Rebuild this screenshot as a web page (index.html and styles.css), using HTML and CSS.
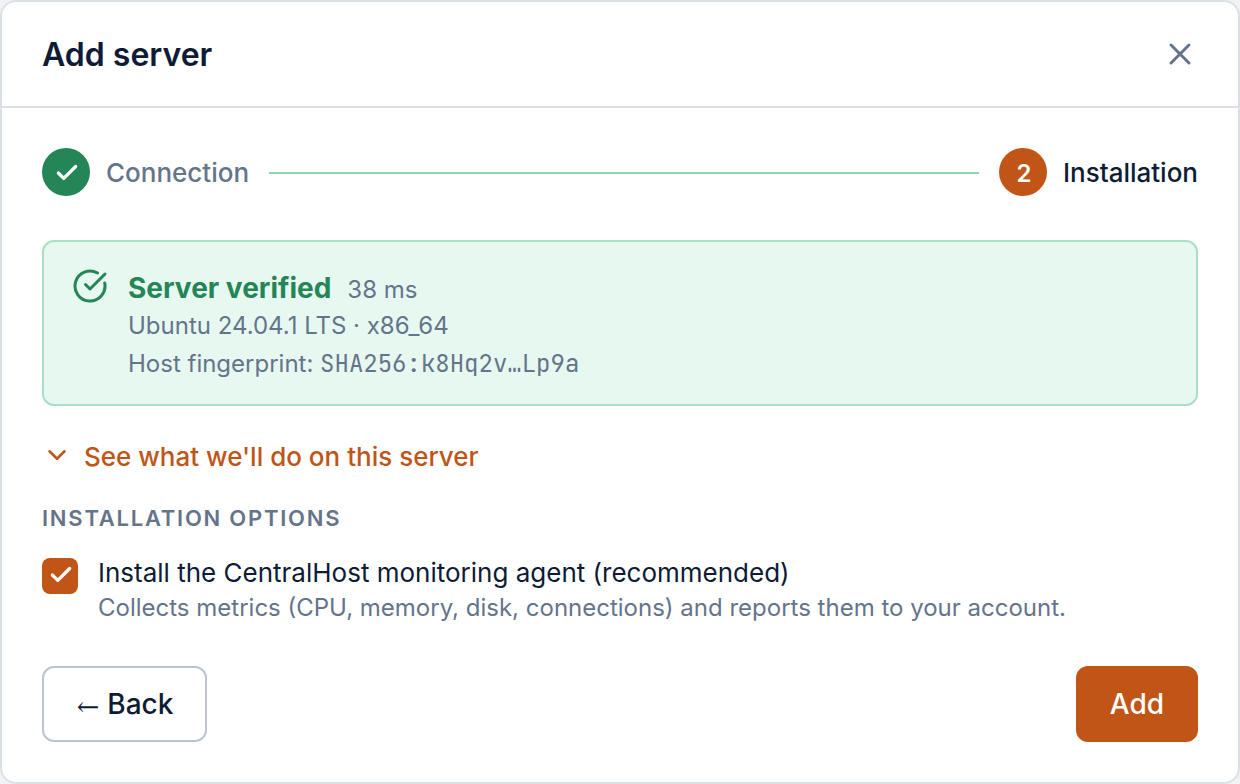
FILE: index.html
```html
<!DOCTYPE html>
<html lang="en">
<head>
  <meta charset="UTF-8">
  <meta name="viewport" content="width=device-width, initial-scale=1">
  <title>Add server</title>
  <link rel="stylesheet" href="styles.css">
</head>
<body>
  <main class="modal">
    <header class="modal-header">
      <h1>Add server</h1>
      <button class="close" type="button" aria-label="Close">
        <svg viewBox="0 0 24 24"><path d="M18 6 6 18M6 6l12 12"/></svg>
      </button>
    </header>

    <form class="modal-body">
      <ol class="steps">
        <li class="step done">
          <span class="badge">
            <svg viewBox="0 0 24 24"><path d="M20 6 9 17l-5-5"/></svg>
          </span>
          Connection
        </li>
        <li class="step-line"></li>
        <li class="step active"><span class="badge">2</span>Installation</li>
      </ol>

      <section class="verified">
        <svg class="verified-icon" viewBox="0 0 24 24"><path d="M21.801 10A10 10 0 1 1 17 3.335"/><path d="m9 11 3 3L22 4"/></svg>
        <div class="verified-text">
          <p class="verified-title"><strong>Server verified</strong><span>38 ms</span></p>
          <p class="verified-os">Ubuntu 24.04.1 LTS · x86_64</p>
          <p class="verified-host">Host fingerprint: <code>SHA256:k8Hq2v…Lp9a</code></p>
        </div>
      </section>

      <button class="details" type="button">
        <svg viewBox="0 0 24 24"><path d="m6 9 6 6 6-6"/></svg>
        See what we'll do on this server
      </button>

      <h2>Installation options</h2>

      <div class="option">
        <span class="check">
          <input type="checkbox" id="agent" checked>
          <svg viewBox="0 0 24 24"><path d="M20 6 9 17l-5-5"/></svg>
        </span>
        <label for="agent">
          <span class="option-title">Install the CentralHost monitoring agent (recommended)</span>
          <span class="option-hint">Collects metrics (CPU, memory, disk, connections) and reports them to your account.</span>
        </label>
      </div>

      <footer class="actions">
        <button class="btn" type="button"><span class="arrow">←</span> Back</button>
        <button class="btn primary" type="submit">Add</button>
      </footer>
    </form>
  </main>
</body>
</html>
```

FILE: styles.css
```css
* {
  box-sizing: border-box;
}

body {
  margin: 0;
  background: #f1f3f6;
  color: #0d1b36;
  font-family: Inter, "Liberation Sans", sans-serif;
  font-size: 26px;
  line-height: 36px;
}

h1, h2, p, ol {
  margin: 0;
  padding: 0;
}

button {
  font: inherit;
  color: inherit;
  cursor: pointer;
}

svg {
  display: block;
  fill: none;
  stroke: currentColor;
  stroke-width: 2;
  stroke-linecap: round;
  stroke-linejoin: round;
}

.modal {
  background: #fff;
  border: 2px solid #dbe0e6;
  border-radius: 16px;
}

.modal-header {
  display: flex;
  justify-content: space-between;
  align-items: center;
  padding: 27px 40px;
  border-bottom: 2px solid #d9e0e9;
}

h1 {
  padding-top: 2px;
  font-size: 32px;
  font-weight: 600;
  line-height: 48px;
}

.close {
  padding: 0;
  border: none;
  background: none;
  color: #64748b;
}

.close svg {
  width: 36px;
  height: 36px;
}

.modal-body {
  padding: 40px;
}

/* steps */
.steps {
  display: flex;
  align-items: center;
  gap: 20px;
  list-style: none;
  font-weight: 500;
  line-height: 37px;
}

.step {
  display: flex;
  align-items: center;
  gap: 16px;
}

.done {
  color: #64748b;
}

.badge {
  display: flex;
  justify-content: center;
  align-items: center;
  width: 48px;
  height: 48px;
  padding: 2px 0 0 2px;
  border-radius: 50%;
  background: #c05517;
  color: #fff;
  font-size: 24px;
  font-weight: 600;
}

.done .badge {
  background: #248557;
}

.badge svg {
  width: 26px;
  height: 26px;
  stroke-width: 3;
}

.step-line {
  flex: 1;
  height: 2px;
  margin-top: 2px;
  background: #94d1b2;
}

/* check result */
.verified {
  display: flex;
  gap: 20px;
  margin-top: 44px;
  padding: 26px 28px 20px;
  background: #e7f8f0;
  border: 2px solid #a9dfc5;
  border-radius: 12px;
  color: #64748b;
  font-size: 24px;
}

.verified-icon {
  width: 36px;
  height: 36px;
  color: #248557;
}

.verified-text {
  padding-top: 2px;
}

.verified-title {
  display: flex;
  align-items: baseline;
  gap: 16px;
}

.verified-title strong {
  color: #248557;
  font-size: 28px;
  font-weight: 700;
}

.verified-host {
  line-height: 40px;
}

code {
  font-family: "JetBrains Mono", "Liberation Mono", monospace;
  font-size: 24px;
}

.details {
  display: flex;
  gap: 12px;
  margin-top: 32px;
  padding: 0;
  border: none;
  background: none;
  color: #c05517;
  font-weight: 500;
  line-height: 38px;
}

.details svg {
  width: 30px;
  height: 30px;
  margin-top: 2px;
}

h2 {
  margin-top: 26px;
  color: #64748b;
  font-size: 22px;
  font-weight: 600;
  line-height: 32px;
  letter-spacing: 0.08em;
  text-transform: uppercase;
}

.option {
  display: flex;
  gap: 20px;
  margin-top: 20px;
}

.check {
  position: relative;
  width: 36px;
  height: 36px;
  margin-top: 4px;
}

.check input {
  appearance: none;
  display: block;
  width: 36px;
  height: 36px;
  margin: 0;
  border-radius: 8px;
  background: #c05517;
}

.check svg {
  position: absolute;
  top: 4px;
  left: 6px;
  width: 26px;
  height: 26px;
  color: #fff;
  stroke-width: 3;
  pointer-events: none;
}

.option-title, .option-hint {
  display: block;
}

.option-title {
  line-height: 38px;
}

.option-hint {
  color: #64748b;
  font-size: 24px;
  line-height: 32px;
}

.actions {
  display: flex;
  justify-content: space-between;
  margin-top: 42px;
}

.btn {
  padding: 16px 32px;
  border: 2px solid #bac4d2;
  border-radius: 12px;
  background: #fff;
  font-size: 28px;
  font-weight: 500;
  line-height: 40px;
}

.arrow {
  font-family: "DejaVu Math TeX Gyre", "DejaVu Sans", sans-serif;
  font-size: 24px;
  font-weight: 400;
  line-height: 1;
}

.primary {
  border-color: #c05517;
  background: #c05517;
  color: #fff;
}
```
